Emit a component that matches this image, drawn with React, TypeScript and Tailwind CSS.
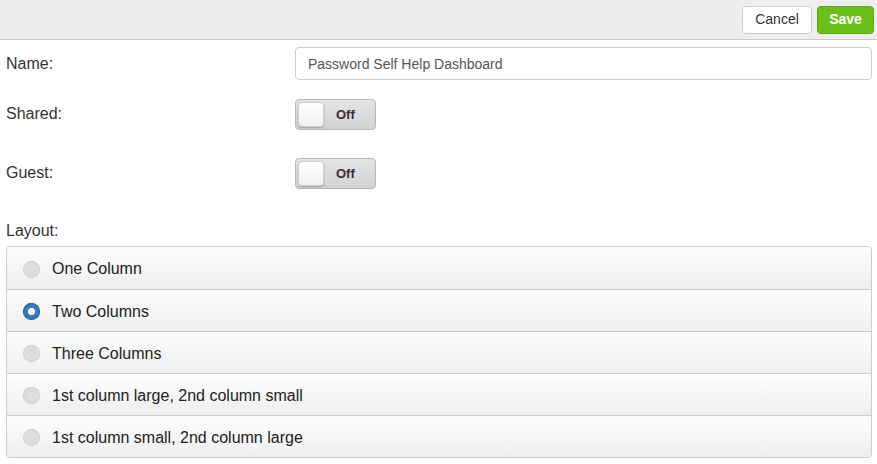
import React, { useState } from "react";

const layouts = [
  "One Column",
  "Two Columns",
  "Three Columns",
  "1st column large, 2nd column small",
  "1st column small, 2nd column large",
];

const Toggle = () => (
  <div className="w-[81px] h-[31px] rounded-[4px] border border-[#b9b9b9] bg-gradient-to-b from-[#e4e4e4] to-[#d2d2d2] flex items-center px-[2px] gap-[12px]">
    <div className="w-[26px] h-[25px] rounded-[4px] bg-gradient-to-b from-white to-[#f0f0f0] border border-[#cfcfcf] shadow-[0_1px_2px_rgba(0,0,0,0.25)]" />
    <span className="text-[13px] font-bold text-[#333]">Off</span>
  </div>
);

const App = () => {
  const [layout, setLayout] = useState(1);

  return (
    <div className="w-[877px] h-[464px] bg-white font-['Liberation_Sans',Arial,sans-serif] text-[16px] text-[#333] overflow-hidden">
      <div className="h-[40px] bg-[#eeeeee] border-b border-[#c9c9c9] flex items-center justify-end gap-[5px] pr-[3px]">
        <button className="h-[28px] w-[70px] rounded-[4px] bg-white border border-[#cccccc] text-[14px] text-[#333]">
          Cancel
        </button>
        <button className="h-[28px] w-[57px] rounded-[4px] bg-[#6abf1c] border border-[#5ca617] text-[14px] font-bold text-white">
          Save
        </button>
      </div>

      <div className="pl-[6px] pr-[5px]">
        <div className="flex items-center h-[33px] mt-[7px]">
          <div className="w-[289px]">Name:</div>
          <input
            className="flex-1 h-[33px] rounded-[4px] border border-[#cccccc] px-[12px] text-[14px] text-[#555] outline-none"
            defaultValue="Password Self Help Dashboard"
          />
        </div>

        <div className="flex items-start mt-[19px]">
          <div className="w-[289px] pt-[3px]">Shared:</div>
          <Toggle />
        </div>

        <div className="flex items-start mt-[28px]">
          <div className="w-[289px] pt-[3px]">Guest:</div>
          <Toggle />
        </div>

        <div className="mt-[33px] leading-[18px]">Layout:</div>

        <div className="mt-[6px] border border-[#cccccc] rounded-[4px] overflow-hidden">
          {layouts.map((l, i) => (
            <div
              key={l}
              onClick={() => setLayout(i)}
              className={`h-[42px] flex items-center gap-[12px] pl-[16px] pt-[2px] bg-gradient-to-b from-[#fdfdfd] to-[#eeeeee] cursor-pointer ${
                i > 0 ? "border-t border-[#cccccc]" : ""
              }`}
            >
              {layout === i ? (
                <div className="w-[17px] h-[17px] rounded-full bg-[#3a7ab5] shadow-[inset_0_0_0_1px_#2f6796] flex items-center justify-center">
                  <div className="w-[7px] h-[7px] rounded-full bg-white" />
                </div>
              ) : (
                <div className="w-[17px] h-[17px] rounded-full bg-[#dcdcdc] shadow-[inset_0_0_0_1px_#d2d2d2]" />
              )}
              <span className="text-[#222]">{l}</span>
            </div>
          ))}
        </div>
      </div>
    </div>
  );
};

export default App;
